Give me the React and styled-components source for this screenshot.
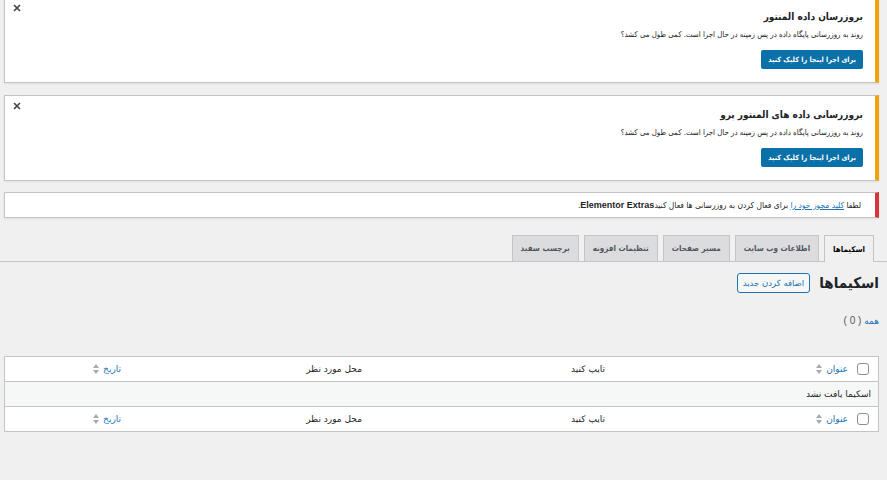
import styled, { createGlobalStyle } from "styled-components";

const narrow = `"DejaVu Sans Condensed", "DejaVu Sans", Tahoma, sans-serif`;

const GlobalStyle = createGlobalStyle`
  html, body {
    margin: 0;
    background: #f0f0f1;
    direction: rtl;
    font-family: "DejaVu Sans", Tahoma, sans-serif;
    color: #1d2327;
    overflow: hidden;
  }
`;

const Page = styled.div`
  padding: 0 8px 0 4px;
`;

const Notice = styled.div`
  position: relative;
  background: #fff;
  border: 1px solid #c3c4c7;
  border-right: 4px solid ${(p) => p.$accent};
  box-shadow: 0 1px 2px rgba(0, 0, 0, 0.08);
  padding: 0 12px;
  margin-top: ${(p) => p.$top || "0"};
  margin-bottom: ${(p) => p.$bottom || "0"};
  font-family: ${narrow};
`;

const Dismiss = styled.button`
  position: absolute;
  left: 6px;
  top: 4px;
  width: 12px;
  height: 12px;
  padding: 0;
  border: 0;
  background: none;
  display: flex;
  align-items: center;
  justify-content: center;
`;

const Title = styled.h3`
  margin: 0;
  padding-top: 12px;
  font-size: 10px;
  font-weight: bold;
  line-height: 14px;
`;

const Text = styled.p`
  margin: 5px 0 0;
  font-size: 7.8px;
  line-height: 12px;
`;

const Primary = styled.button`
  display: block;
  margin: 9px 0 13px;
  height: 19px;
  padding: 0 7px;
  border: 0;
  border-radius: 2px;
  background: #0a70a8;
  color: #fff;
  font-family: inherit;
  font-size: 7.2px;
  font-weight: bold;
`;

const Inline = styled.p`
  margin: 0;
  padding-right: 2px;
  font-size: 8.4px;
  line-height: 24px;
  a {
    color: #2271b1;
    text-decoration: underline;
  }
  b {
    font-family: "Liberation Sans", Arial, sans-serif;
    font-size: 9px;
  }
`;

const Tabs = styled.nav`
  display: flex;
  gap: 5px;
  margin: 17px -8px 0 -4px;
  padding: 0 13px 0 0;
  border-bottom: 1px solid #c3c4c7;
`;

const Tab = styled.a`
  display: flex;
  align-items: center;
  padding: 0 8px;
  border: 1px solid #c3c4c7;
  border-bottom: 0;
  margin-bottom: ${(p) => (p.$active ? "-1px" : "0")};
  height: ${(p) => (p.$active ? "26px" : "25px")};
  background: ${(p) => (p.$active ? "#f0f0f1" : "#dcdcde")};
  color: ${(p) => (p.$active ? "#000" : "#50575e")};
  font-family: ${narrow};
  font-size: 8px;
  font-weight: bold;
`;

const HeadRow = styled.div`
  display: flex;
  align-items: center;
  gap: 9px;
  height: 20px;
  margin-top: 11px;
`;

const Heading = styled.h1`
  margin: 0;
  font-family: ${narrow};
  font-size: 15px;
  font-weight: bold;
`;

const Outline = styled.button`
  height: 20px;
  padding: 0 5px;
  border: 1px solid #2271b1;
  border-radius: 3px;
  background: #f6f7f7;
  color: #2271b1;
  font-family: inherit;
  font-size: 8.5px;
`;

const Filter = styled.div`
  margin-top: 22px;
  font-size: 9px;
  color: #2271b1;
  span {
    color: #50575e;
    font-family: "Liberation Sans", Arial, sans-serif;
    font-size: 10px;
  }
`;

const Table = styled.div`
  margin-top: 30px;
  background: #fff;
  border: 1px solid #c3c4c7;
`;

const Row = styled.div`
  display: grid;
  grid-template-columns: 22px 243px 243px 241px 1fr;
  height: 24px;
  align-items: center;
  border-top: ${(p) => (p.$first ? "0" : "1px solid #c3c4c7")};
  font-size: 9px;
`;

const Empty = styled.div`
  height: 24px;
  display: flex;
  align-items: center;
  padding-right: 7px;
  border-top: 1px solid #c3c4c7;
  background: #f6f7f7;
  font-size: 9px;
`;

const Cell = styled.div`
  padding: 0 8px;
  display: flex;
  align-items: center;
  gap: 4px;
  color: ${(p) => (p.$link ? "#2271b1" : "#1d2327")};
`;

const Box = styled.span`
  width: 12px;
  height: 12px;
  margin-right: 9px;
  border: 1px solid #8c8f94;
  border-radius: 3px;
  background: #fff;
  box-sizing: border-box;
`;

const Close = () => (
  <svg width="8" height="8" viewBox="0 0 8 8">
    <path d="M1 1 L7 7 M7 1 L1 7" stroke="#3c434a" strokeWidth="1.6" />
  </svg>
);

const Sort = () => (
  <svg width="6" height="10" viewBox="0 0 6 10">
    <path d="M0 4 L3 0 L6 4 Z M0 6 L3 10 L6 6 Z" fill="#a7aaad" />
  </svg>
);

const Columns = ({ first }) => (
  <Row $first={first}>
    <Box />
    <Cell $link>
      عنوان <Sort />
    </Cell>
    <Cell>تایپ کنید</Cell>
    <Cell>محل مورد نظر</Cell>
    <Cell $link>
      تاریخ <Sort />
    </Cell>
  </Row>
);

const UpdateNotice = ({ title, top }) => (
  <Notice $accent="#f0a30a" $top={top} $bottom="12px">
    <Dismiss>
      <Close />
    </Dismiss>
    <Title>{title}</Title>
    <Text>روند به روزرسانی پایگاه داده در پس زمینه در حال اجرا است. کمی طول می کشد؟</Text>
    <Primary>برای اجرا اینجا را کلیک کنید</Primary>
  </Notice>
);

const tabs = ["اسکیماها", "اطلاعات وب سایت", "مسیر صفحات", "تنظیمات افزونه", "برچسب سفید"];

export default function App() {
  return (
    <Page>
      <GlobalStyle />
      <UpdateNotice title="بروزرسان داده المنتور" top="-3px" />
      <UpdateNotice title="بروزرسانی داده های المنتور پرو" />
      <Notice $accent="#d63638" $top="-1px">
        <Inline>
          لطفا <a href="#">کلید مجوز خود را</a> برای فعال کردن به روزرسانی ها فعال کنید
          <b>Elementor Extras</b>.
        </Inline>
      </Notice>
      <Tabs>
        {tabs.map((t, i) => (
          <Tab key={t} $active={i === 0}>
            {t}
          </Tab>
        ))}
      </Tabs>
      <HeadRow>
        <Heading>اسکیماها</Heading>
        <Outline>اضافه کردن جدید</Outline>
      </HeadRow>
      <Filter>
        همه <span>( 0 )</span>
      </Filter>
      <Table>
        <Columns first />
        <Empty>اسکیما یافت نشد</Empty>
        <Columns />
      </Table>
    </Page>
  );
}
